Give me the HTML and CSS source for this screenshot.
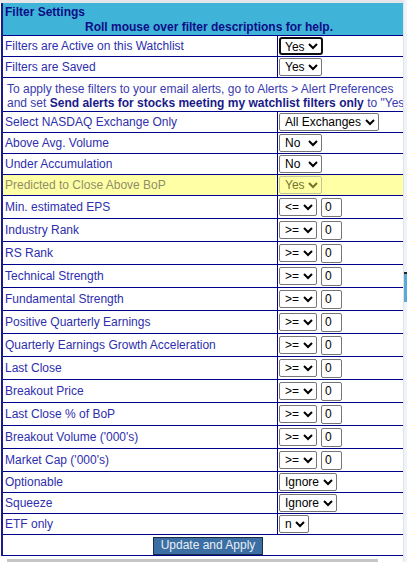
FILE: index.html
```html
<!DOCTYPE html>
<html>
<head>
<meta charset="utf-8">
<link rel="stylesheet" href="styles.css">
</head>
<body>
<div class="page">
  <div class="frame">
    <div class="topline"></div>
    <div class="viewport">
      <table class="filters">
        <tr class="head">
          <td colspan="2">
            <div class="head-title">Filter Settings</div>
            <div class="head-sub">Roll mouse over filter descriptions for help.</div>
          </td>
        </tr>
        <tr class="r21"><td class="lbl">Filters are Active on this Watchlist</td><td class="ctl"><select class="sel focused"><option>Yes</option></select></td></tr>
        <tr class="r21"><td class="lbl">Filters are Saved</td><td class="ctl"><select class="sel"><option>Yes</option></select></td></tr>
        <tr class="note"><td colspan="2">To apply these filters to your email alerts, go to Alerts &gt; Alert Preferences<br>and set <b>Send alerts for stocks meeting my watchlist filters only</b> to "Yes"</td></tr>
        <tr class="r21"><td class="lbl">Select NASDAQ Exchange Only</td><td class="ctl"><select class="sel"><option>All Exchanges</option></select></td></tr>
        <tr class="r21"><td class="lbl">Above Avg. Volume</td><td class="ctl"><select class="sel"><option>No</option><option>Yes</option></select></td></tr>
        <tr class="r21"><td class="lbl">Under Accumulation</td><td class="ctl"><select class="sel"><option>No</option><option>Yes</option></select></td></tr>
        <tr class="r21 hl"><td class="lbl">Predicted to Close Above BoP</td><td class="ctl"><select class="sel dis" disabled><option>Yes</option></select></td></tr>
        <tr class="r23"><td class="lbl">Min. estimated EPS</td><td class="ctl"><select class="sel op"><option>&lt;=</option><option>&gt;=</option></select><input class="num" value="0"></td></tr>
        <tr class="r23"><td class="lbl">Industry Rank</td><td class="ctl"><select class="sel op"><option>&gt;=</option><option>&lt;=</option></select><input class="num" value="0"></td></tr>
        <tr class="r23"><td class="lbl">RS Rank</td><td class="ctl"><select class="sel op"><option>&gt;=</option><option>&lt;=</option></select><input class="num" value="0"></td></tr>
        <tr class="r23"><td class="lbl">Technical Strength</td><td class="ctl"><select class="sel op"><option>&gt;=</option><option>&lt;=</option></select><input class="num" value="0"></td></tr>
        <tr class="r23"><td class="lbl">Fundamental Strength</td><td class="ctl"><select class="sel op"><option>&gt;=</option><option>&lt;=</option></select><input class="num" value="0"></td></tr>
        <tr class="r23"><td class="lbl">Positive Quarterly Earnings</td><td class="ctl"><select class="sel op"><option>&gt;=</option><option>&lt;=</option></select><input class="num" value="0"></td></tr>
        <tr class="r23"><td class="lbl">Quarterly Earnings Growth Acceleration</td><td class="ctl"><select class="sel op"><option>&gt;=</option><option>&lt;=</option></select><input class="num" value="0"></td></tr>
        <tr class="r23"><td class="lbl">Last Close</td><td class="ctl"><select class="sel op"><option>&gt;=</option><option>&lt;=</option></select><input class="num" value="0"></td></tr>
        <tr class="r23"><td class="lbl">Breakout Price</td><td class="ctl"><select class="sel op"><option>&gt;=</option><option>&lt;=</option></select><input class="num" value="0"></td></tr>
        <tr class="r23"><td class="lbl">Last Close % of BoP</td><td class="ctl"><select class="sel op"><option>&gt;=</option><option>&lt;=</option></select><input class="num" value="0"></td></tr>
        <tr class="r23"><td class="lbl">Breakout Volume ('000's)</td><td class="ctl"><select class="sel op"><option>&gt;=</option><option>&lt;=</option></select><input class="num" value="0"></td></tr>
        <tr class="r23"><td class="lbl">Market Cap ('000's)</td><td class="ctl"><select class="sel op"><option>&gt;=</option><option>&lt;=</option></select><input class="num" value="0"></td></tr>
        <tr class="r21"><td class="lbl">Optionable</td><td class="ctl"><select class="sel"><option>Ignore</option></select></td></tr>
        <tr class="r21"><td class="lbl">Squeeze</td><td class="ctl"><select class="sel"><option>Ignore</option></select></td></tr>
        <tr class="r21"><td class="lbl">ETF only</td><td class="ctl"><select class="sel"><option>n</option></select></td></tr>
        <tr class="btnrow"><td colspan="2"><button class="apply">Update and Apply</button></td></tr>
      </table>
    </div>
    <div class="hscroll"><div class="hthumb"></div></div>
  </div>
  <div class="vstrip"><div class="vthumb"></div></div>
</div>
</body>
</html>
```
FILE: styles.css
```css
html, body {
  margin: 0;
  padding: 0;
  background: #ffffff;
}
body {
  font-family: "Liberation Sans", Arial, sans-serif;
  width: 407px;
  height: 562px;
  overflow: hidden;
}
.page {
  display: flex;
  width: 407px;
  height: 562px;
}
.frame {
  width: 403px;
  display: flex;
  flex-direction: column;
}
.topline {
  height: 3px;
  background: #e4e6e8;
  flex: none;
}
.viewport {
  width: 403px;
  overflow: hidden;
  padding-left: 1px;
  box-sizing: border-box;
  flex: none;
}
.filters {
  width: 412px;
  border-collapse: collapse;
  border-left: 2px solid #1b1b8c;
  font-size: 12px;
  color: #2e2eae;
}
.filters td {
  padding: 0;
  border-bottom: 1px solid #00008b;
}
.head td {
  background: #3fb4d8;
  color: #0c0c86;
  font-weight: bold;
  font-size: 12px;
  height: 31px;
  padding: 1px 0 0 2px;
  line-height: 15px;
}
.head-sub {
  text-align: center;
}
.lbl {
  width: 272px;
  padding-left: 2px !important;
  border-right: 1px solid #00008b;
  white-space: nowrap;
  vertical-align: middle;
}
.ctl {
  padding-left: 1px !important;
  vertical-align: middle;
}
.r21 td { height: 20px; }
.r23 td { height: 22px; }
.note td {
  padding: 3px 2px 1px 4px;
  line-height: 14px;
  height: 29px;
  color: #3a3ab0;
  white-space: nowrap;
}
.note b { color: #1a1a8a; }
.hl td { background: #ffffa6; color: #8e8e68; }
.sel {
  font-family: "Liberation Sans", Arial, sans-serif;
  font-size: 12px;
  height: 18px;
  padding: 0 0 0 1px;
  border: 1px solid #767676;
  border-radius: 2px;
  background: #ffffff;
  color: #000000;
  vertical-align: middle;
  margin: 0;
}
.sel.focused {
  border: 2px solid #101010;
  border-radius: 3px;
  outline: none;
  padding-left: 0;
}
.sel.dis {
  background: #ffffa6;
  color: #74742a;
  border-color: #c4c49a;
  opacity: 1;
}
.sel.op { margin-right: 4px; }
.num {
  font-family: "Liberation Sans", Arial, sans-serif;
  font-size: 12px;
  box-sizing: border-box;
  width: 21px;
  height: 19px;
  padding: 0 3px;
  border: 1px solid #767676;
  border-radius: 2px;
  color: #000;
  vertical-align: middle;
  margin: 0;
}
.btnrow td {
  text-align: center;
  height: 20px;
  padding: 0;
}
.apply {
  font-family: "Liberation Sans", Arial, sans-serif;
  font-size: 12px;
  background: #3b6ea2;
  color: #e8eef6;
  border: 1px solid #1d2f48;
  padding: 0 7px;
  height: 18px;
  line-height: 15px;
  margin: 1px 0 0;
  vertical-align: middle;
}
.hscroll {
  margin-top: 3px;
  height: 3px;
  padding-left: 7px;
  flex: none;
}
.hthumb {
  width: 371px;
  height: 3px;
  background: #c6c6c6;
}
.vstrip {
  width: 4px;
  height: 562px;
  background: #f1f4f7;
  border-left: 1px solid #dfe4ea;
  box-sizing: border-box;
  padding-top: 272px;
}
.vthumb {
  height: 28px;
  width: 3px;
  background: #5aa9d8;
  border-top: 2px solid #222;
}
```
